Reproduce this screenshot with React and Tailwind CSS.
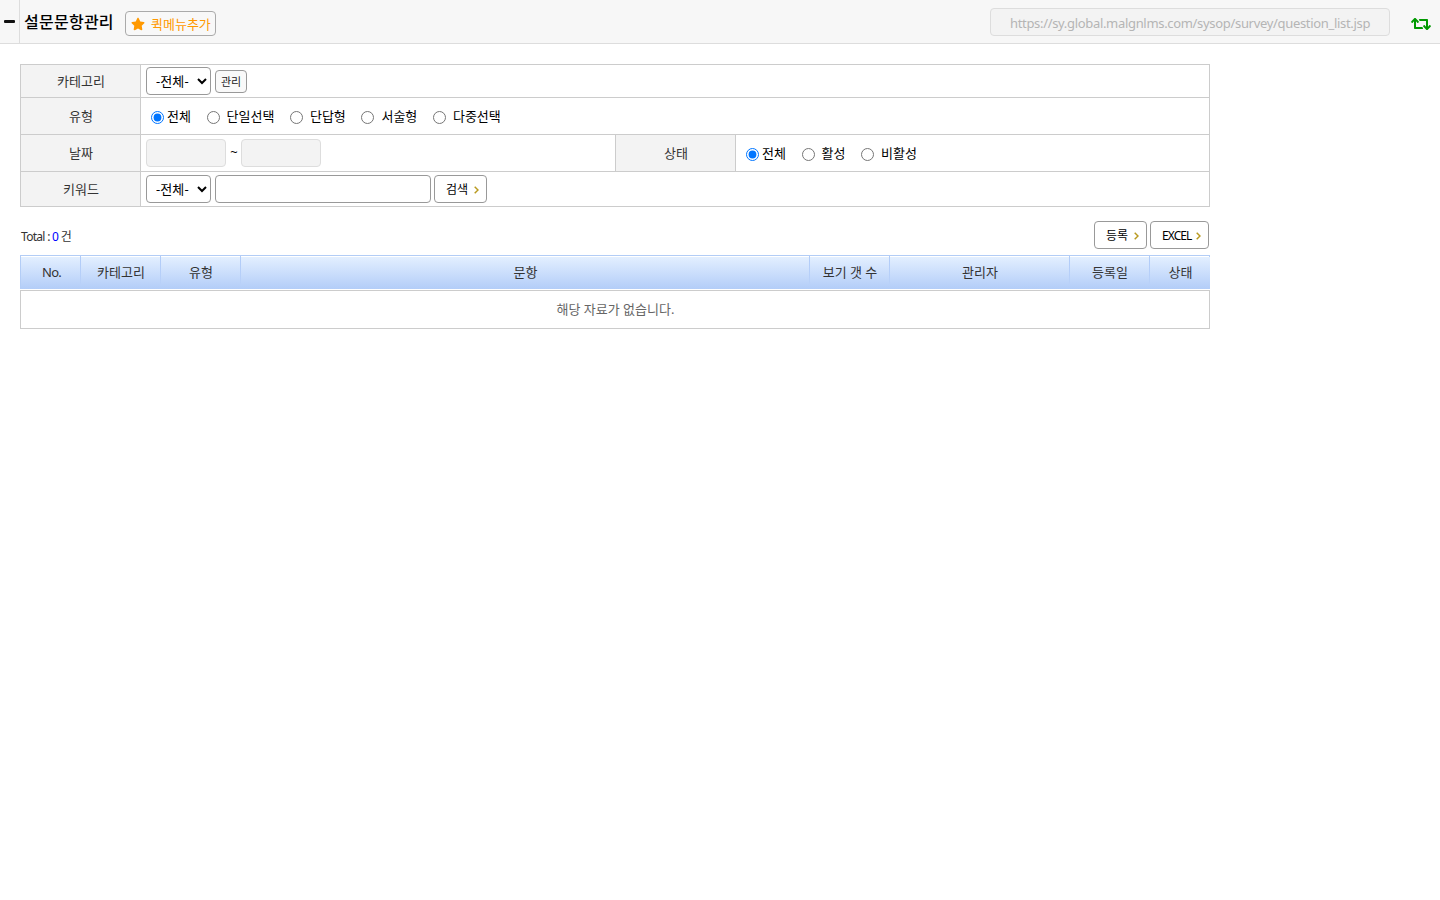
import React, { useState } from 'react';
import { FaRetweet, FaStar } from 'react-icons/fa';

const TYPES = ['전체', '단일선택', '단답형', '서술형', '다중선택'];
const STATUSES = ['전체', '활성', '비활성'];

const COLUMNS = [
  { label: 'No.', width: 'w-[60px]', text: 'tracking-[-0.8px] pl-[2px]' },
  { label: '카테고리', width: 'w-[80px]' },
  { label: '유형', width: 'w-[80px]' },
  { label: '문항', width: 'w-[569px]' },
  { label: '보기 갯 수', width: 'w-[80px]' },
  { label: '관리자', width: 'w-[180px]' },
  { label: '등록일', width: 'w-[80px]' },
  { label: '상태', width: 'w-[60px]' },
];

const RadioGroup = ({ name, options }) => {
  const [selected, setSelected] = useState(options[0]);

  return (
    <div className="flex items-center pl-[5px] text-black">
      {options.map((option, index) => (
        <label
          key={option}
          className={`flex items-center mr-[15.6px] ${index === 0 ? 'gap-[3px]' : 'gap-[7px]'}`}
        >
          <input
            type="radio"
            name={name}
            className="block h-[13px] w-[13px] mt-[2px]"
            checked={selected === option}
            onChange={() => setSelected(option)}
          />
          <span className="whitespace-nowrap">{option}</span>
        </label>
      ))}
    </div>
  );
};

const HeadCell = ({ children }) => (
  <div className="flex w-[120px] shrink-0 items-center justify-center border-r border-[#ccc] bg-[#f3f3f3] pl-px text-[#333]">
    {children}
  </div>
);

const AllSelect = () => (
  <select className="h-7 w-[65px] rounded border border-[#999] bg-white pl-[5px] text-[13px] tracking-[0.1px] text-black">
    <option>-전체-</option>
  </select>
);

const ArrowButton = ({ children, className }) => (
  <button
    type="button"
    className={`flex h-7 items-center rounded border border-[#999] bg-white pl-[11px] text-[12px] text-black ${className}`}
  >
    <span className="flex-1 pt-[2px] text-left whitespace-nowrap">{children}</span>
    <svg className="mt-px mr-[7px] h-[8px] w-[5px]" viewBox="0 0 5 8" fill="none">
      <path d="M0.7 0.7L4 4L0.7 7.3" stroke="#b99a20" strokeWidth="1.5" />
    </svg>
  </button>
);

const Header = () => (
  <header className="flex h-11 items-center border-b border-[#ddd] bg-[#f7f7f7]">
    <button className="flex h-full w-5 shrink-0 items-center border-r border-[#ddd] pl-1">
      <span className="block h-[3px] w-[11px] rounded-[1px] bg-[#111]" />
    </button>
    <h1 className="ml-1 w-[91px] text-[16px] font-medium tracking-[0.25px] whitespace-nowrap text-black">
      설문문항관리
    </h1>
    <button className="mt-[3px] ml-[10px] flex h-[25px] w-[91px] items-center rounded border border-[#aaa] bg-[#f8f8f8] pl-[5px] text-[#f90]">
      <FaStar className="mt-px mr-[6px] h-[14px] w-[14px] shrink-0" />
      <span className="pt-px text-[13px] whitespace-nowrap">퀵메뉴추가</span>
    </button>
    <input
      type="text"
      readOnly
      value="https://sy.global.malgnlms.com/sysop/survey/question_list.jsp"
      className="ml-auto h-7 w-[400px] rounded border border-[#ddd] bg-[#f3f3f3] pt-[2px] text-center text-[13px] tracking-[-0.32px] text-[#b5b5b5]"
    />
    <FaRetweet className="mt-1 mr-[9px] ml-[21px] h-5 w-5 text-[#090]" />
  </header>
);

const SearchForm = () => (
  <form className="border border-[#ccc]">
    <div className="flex h-[33px] border-b border-[#ccc]">
      <HeadCell>카테고리</HeadCell>
      <div className="flex items-center gap-1 pl-[5px]">
        <AllSelect />
        <button
          type="button"
          className="h-[23px] w-8 rounded border border-[#999] bg-[#f9f9f9] text-[11px] leading-none text-[#222]"
        >
          관리
        </button>
      </div>
    </div>
    <div className="flex h-[37px] border-b border-[#ccc]">
      <HeadCell>유형</HeadCell>
      <div className="flex items-center pl-[5px]">
        <RadioGroup name="type" options={TYPES} />
      </div>
    </div>
    <div className="flex h-[37px] border-b border-[#ccc]">
      <HeadCell>날짜</HeadCell>
      <div className="flex w-[475px] items-center border-r border-[#ccc] pl-[5px] text-black">
        <input type="text" readOnly className="h-7 w-20 rounded border border-[#ddd] bg-[#f3f3f3]" />
        <span className="w-[15px] pb-[2px] pl-px text-center">~</span>
        <input type="text" readOnly className="h-7 w-20 rounded border border-[#ddd] bg-[#f3f3f3]" />
      </div>
      <HeadCell>상태</HeadCell>
      <div className="flex items-center pl-[5px]">
        <RadioGroup name="status" options={STATUSES} />
      </div>
    </div>
    <div className="flex h-[34px]">
      <HeadCell>키워드</HeadCell>
      <div className="flex items-center pl-[5px]">
        <AllSelect />
        <input type="text" className="ml-1 h-7 w-[216px] rounded border border-[#999] bg-white px-2" />
        <ArrowButton className="ml-[3px] w-[53px]">검색</ArrowButton>
      </div>
    </div>
  </form>
);

const QuestionList = () => (
  <div>
    <div className="flex border-t border-r border-l border-[#b3cdf6] pt-px">
      {COLUMNS.map((column, index) => (
        <div
          key={column.label}
          className={`flex h-8 shrink-0 bg-linear-to-b from-[#e3efff] to-[#b3cdf8] ${column.width}`}
        >
          <span className={`flex-1 pt-[5px] text-center whitespace-nowrap text-[#333] ${column.text || 'pl-px'}`}>
            {column.label}
          </span>
          {index < COLUMNS.length - 1 && (
            <span className="-mt-px h-[28px] w-px bg-linear-to-b from-[#b0cbf8] to-[#b9d1f9]" />
          )}
        </div>
      ))}
    </div>
    <div className="mt-px flex h-[39px] items-center justify-center border border-[#ccc] pb-px pl-px text-[#666]">
      해당 자료가 없습니다.
    </div>
  </div>
);

const App = () => {
  return (
    <div className="min-h-screen bg-white font-['Noto_Sans','Noto_Sans_CJK_KR',sans-serif] text-[13px] leading-5">
      <Header />
      <main className="ml-5 w-[1190px] pt-5">
        <SearchForm />
        <div className="mt-[14px] mb-[6px] flex h-7 items-center">
          <p className="mt-[3px] ml-px text-[12px] tracking-[-0.7px] text-[#333]">
            Total : <span className="text-[#00f]">0</span> 건
          </p>
          <div className="mr-px ml-auto flex gap-[3px]">
            <ArrowButton className="w-[53px]">등록</ArrowButton>
            <ArrowButton className="w-[59px] tracking-[-0.9px]">EXCEL</ArrowButton>
          </div>
        </div>
        <QuestionList />
      </main>
    </div>
  );
};

export default App;
